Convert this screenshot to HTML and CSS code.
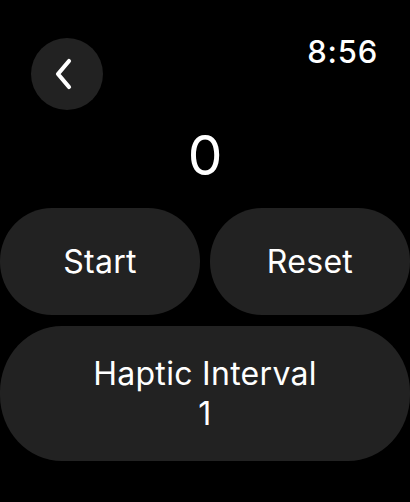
FILE: index.html
```html
<!DOCTYPE html>
<html>
<head>
<meta charset="utf-8">
<link rel="stylesheet" href="styles.css">
</head>
<body>
<div class="screen">
  <div class="header">
    <div class="back">
      <svg width="22" height="34" viewBox="0 0 22 34"><path d="M16 4 L5 17 L16 30" fill="none" stroke="#fff" stroke-width="4.2" stroke-linecap="round" stroke-linejoin="round"/></svg>
    </div>
    <div class="time">8:56</div>
  </div>
  <div class="count">0</div>
  <div class="row">
    <div class="btn">Start</div>
    <div class="btn">Reset</div>
  </div>
  <div class="btn wide">
    <span>Haptic Interval</span>
    <span>1</span>
  </div>
</div>
</body>
</html>
```

FILE: styles.css
```css
html, body {
  margin: 0;
  padding: 0;
  background: #000;
}
.screen {
  width: 410px;
  height: 502px;
  font-family: Inter, "Open Sans", sans-serif;
  color: #fff;
  display: flex;
  flex-direction: column;
}
.header {
  display: flex;
  justify-content: space-between;
  align-items: flex-start;
  padding: 38px 32px 0 31px;
  height: 72px;
}
.back {
  width: 72px;
  height: 72px;
  border-radius: 50%;
  background: #222;
  display: flex;
  align-items: center;
  justify-content: center;
}
.back svg {
  margin-left: -6px;
}
.time {
  font-size: 31px;
  font-weight: 500;
  line-height: 36px;
  margin-top: -4px;
  letter-spacing: 0.8px;
}
.count {
  text-align: center;
  font-size: 55px;
  line-height: 60px;
  margin-top: 15px;
  height: 60px;
}
.row {
  display: flex;
  gap: 10px;
  margin-top: 23px;
}
.btn {
  flex: 1;
  height: 107px;
  background: #222;
  border-radius: 52px / 53px;
  display: flex;
  align-items: center;
  justify-content: center;
  font-size: 32px;
  letter-spacing: 0.3px;
}
.wide {
  flex: none;
  height: 135px;
  margin-top: 11px;
  border-radius: 62px / 66px;
  flex-direction: column;
  line-height: 40px;
}
```
